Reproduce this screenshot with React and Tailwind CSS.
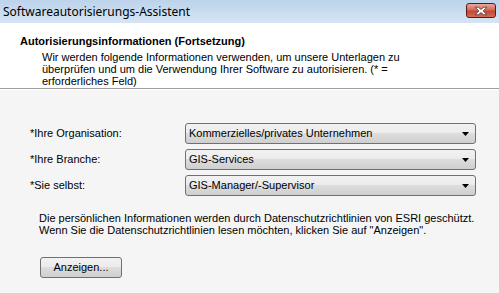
import React from 'react';

const Combo = ({ value }) => (
  <div className="relative flex h-[21px] w-[291px] items-center rounded-[3px] border border-[#707070] bg-[linear-gradient(to_bottom,#f2f2f2_0%,#ebebeb_50%,#dddddd_50%,#cfcfcf_100%)] pl-[3px] text-[11px] leading-none text-black">
    <span>{value}</span>
    <svg className="absolute right-[6px] top-[8px]" width="7" height="4" viewBox="0 0 7 4">
      <path d="M0 0 H7 L3.5 4 Z" fill="#000" />
    </svg>
  </div>
);

const fields = [
  { label: '*Ihre Organisation:', value: 'Kommerzielles/privates Unternehmen' },
  { label: '*Ihre Branche:', value: 'GIS-Services' },
  { label: '*Sie selbst:', value: 'GIS-Manager/-Supervisor' },
];

export default function App() {
  return (
    <div className="h-[293px] w-[499px] overflow-hidden bg-[#f5f5f5] font-['Liberation_Sans',Arial,sans-serif] text-black">
      {/* title bar */}
      <div className="flex h-[23px] items-center justify-between bg-gradient-to-b from-[#bcd3eb] to-[#d6e5f4] pl-[3px] pr-[3px]">
        <span className="font-['Noto_Sans',sans-serif] text-[12px] leading-none text-black">
          Softwareautorisierungs-Assistent
        </span>
        <div className="mt-[-2px] flex h-[15px] w-[30px] items-center justify-center rounded-[3px] border border-[#5b1a1a] bg-[linear-gradient(to_bottom,#e8a89a_0%,#d46a5a_45%,#c24634_55%,#d66d55_100%)]">
          <svg width="14" height="10" viewBox="0 0 13 9">
            <path
              d="M1 1 L4 1 L6.5 3 L9 1 L12 1 L8.5 4.5 L12 8 L9 8 L6.5 6 L4 8 L1 8 L4.5 4.5 Z"
              fill="#ffffff"
              stroke="#5a3b3b"
              strokeWidth="0.8"
              strokeLinejoin="round"
            />
          </svg>
        </div>
      </div>

      {/* header */}
      <div className="border-b border-[#a0a0a0] bg-white pb-[1px] pt-[12px] text-[11px]">
        <div className="pl-[20px] font-bold leading-[13px]">Autorisierungsinformationen (Fortsetzung)</div>
        <div className="mt-[3px] pl-[42px] leading-[12px]">
          Wir werden folgende Informationen verwenden, um unsere Unterlagen zu
          <br />
          überprüfen und um die Verwendung Ihrer Software zu autorisieren. (* =
          <br />
          erforderliches Feld)
        </div>
      </div>
      <div className="h-px bg-white" />

      {/* body */}
      <div className="flex flex-col gap-[5px] pl-[30px] pt-[33px]">
        {fields.map((f) => (
          <div key={f.label} className="flex items-center">
            <span className="w-[155px] text-[11px] leading-none">{f.label}</span>
            <Combo value={f.value} />
          </div>
        ))}
      </div>

      <div className="pl-[39px] pt-[16px] text-[11px] leading-[12px]">
        <div>Die persönlichen Informationen werden durch Datenschutzrichtlinien von ESRI geschützt.</div>
        <div>Wenn Sie die Datenschutzrichtlinien lesen möchten, klicken Sie auf "Anzeigen".</div>
      </div>

      <div className="pl-[40px] pt-[21px]">
        <button className="flex h-[21px] w-[82px] items-center justify-center rounded-[3px] border border-[#707070] bg-[linear-gradient(to_bottom,#f2f2f2_0%,#ebebeb_50%,#dddddd_50%,#cfcfcf_100%)] text-[11px] leading-none text-black">
          Anzeigen...
        </button>
      </div>
    </div>
  );
}
